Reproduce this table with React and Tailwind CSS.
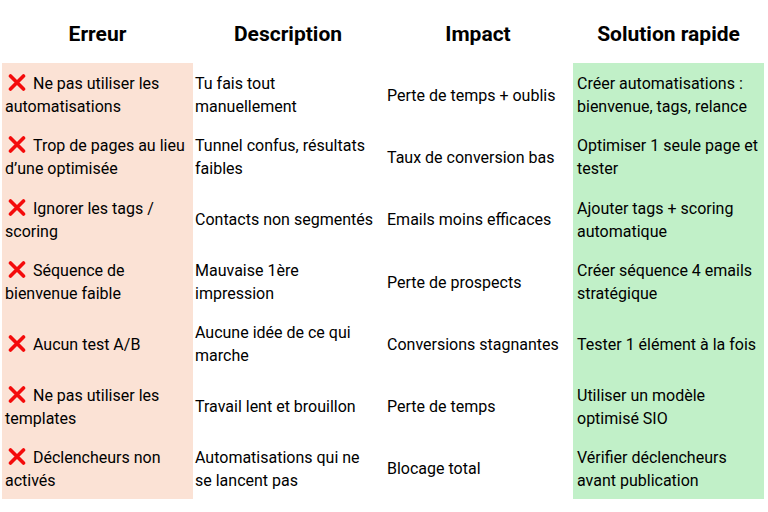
import React from "react";

const rows = [
  [
    ["Ne pas utiliser les", "automatisations"],
    ["Tu fais tout", "manuellement"],
    ["Perte de temps + oublis"],
    ["Créer automatisations :", "bienvenue, tags, relance"],
  ],
  [
    ["Trop de pages au lieu", "d’une optimisée"],
    ["Tunnel confus, résultats", "faibles"],
    ["Taux de conversion bas"],
    ["Optimiser 1 seule page et", "tester"],
  ],
  [
    ["Ignorer les tags /", "scoring"],
    ["Contacts non segmentés"],
    ["Emails moins efficaces"],
    ["Ajouter tags + scoring", "automatique"],
  ],
  [
    ["Séquence de", "bienvenue faible"],
    ["Mauvaise 1ère", "impression"],
    ["Perte de prospects"],
    ["Créer séquence 4 emails", "stratégique"],
  ],
  [
    ["Aucun test A/B"],
    ["Aucune idée de ce qui", "marche"],
    ["Conversions stagnantes"],
    ["Tester 1 élément à la fois"],
  ],
  [
    ["Ne pas utiliser les", "templates"],
    ["Travail lent et brouillon"],
    ["Perte de temps"],
    ["Utiliser un modèle", "optimisé SIO"],
  ],
  [
    ["Déclencheurs non", "activés"],
    ["Automatisations qui ne", "se lancent pas"],
    ["Blocage total"],
    ["Vérifier déclencheurs", "avant publication"],
  ],
];

const CrossIcon = () => (
  <svg
    width="18"
    height="17"
    viewBox="0 0 18 17"
    className="inline-block mr-[7px] ml-[3px] align-[-2px]"
  >
    <path
      d="M2.5 2 L15.5 15 M15.5 2 L2.5 15"
      stroke="#f40b0b"
      strokeWidth="3.6"
      strokeLinecap="round"
    />
  </svg>
);

const Cell = ({ lines, bg, pad, cross }) => (
  <div className={`h-[62.3px] flex items-center pt-[2px] ${bg} ${pad}`}>
    <div className="leading-[23px] whitespace-nowrap">
      {lines.map((l, i) => (
        <div key={i}>
          {cross && i === 0 && <CrossIcon />}
          {l}
        </div>
      ))}
    </div>
  </div>
);

export default function App() {
  return (
    <div
      className="w-[768px] h-[512px] bg-white text-black text-[16px]"
      style={{ fontFamily: "Roboto, 'Liberation Sans', sans-serif" }}
    >
      <div className="ml-[2px] grid grid-cols-[191px_190px_190px_191px]">
        {["Erreur", "Description", "Impact", "Solution rapide"].map((h) => (
          <div
            key={h}
            className="h-[63px] flex items-center justify-center pt-[6px] text-[21px] font-bold"
          >
            {h}
          </div>
        ))}
        {rows.map((r, ri) => (
          <React.Fragment key={ri}>
            <Cell lines={r[0]} bg="bg-[#fbe2d5]" pad="pl-[3px]" cross />
            <Cell lines={r[1]} bg="" pad="pl-[2px]" />
            <Cell lines={r[2]} bg="" pad="pl-[4px]" />
            <Cell lines={r[3]} bg="bg-[#c1f0c8]" pad="pl-[4px]" />
          </React.Fragment>
        ))}
      </div>
    </div>
  );
}
